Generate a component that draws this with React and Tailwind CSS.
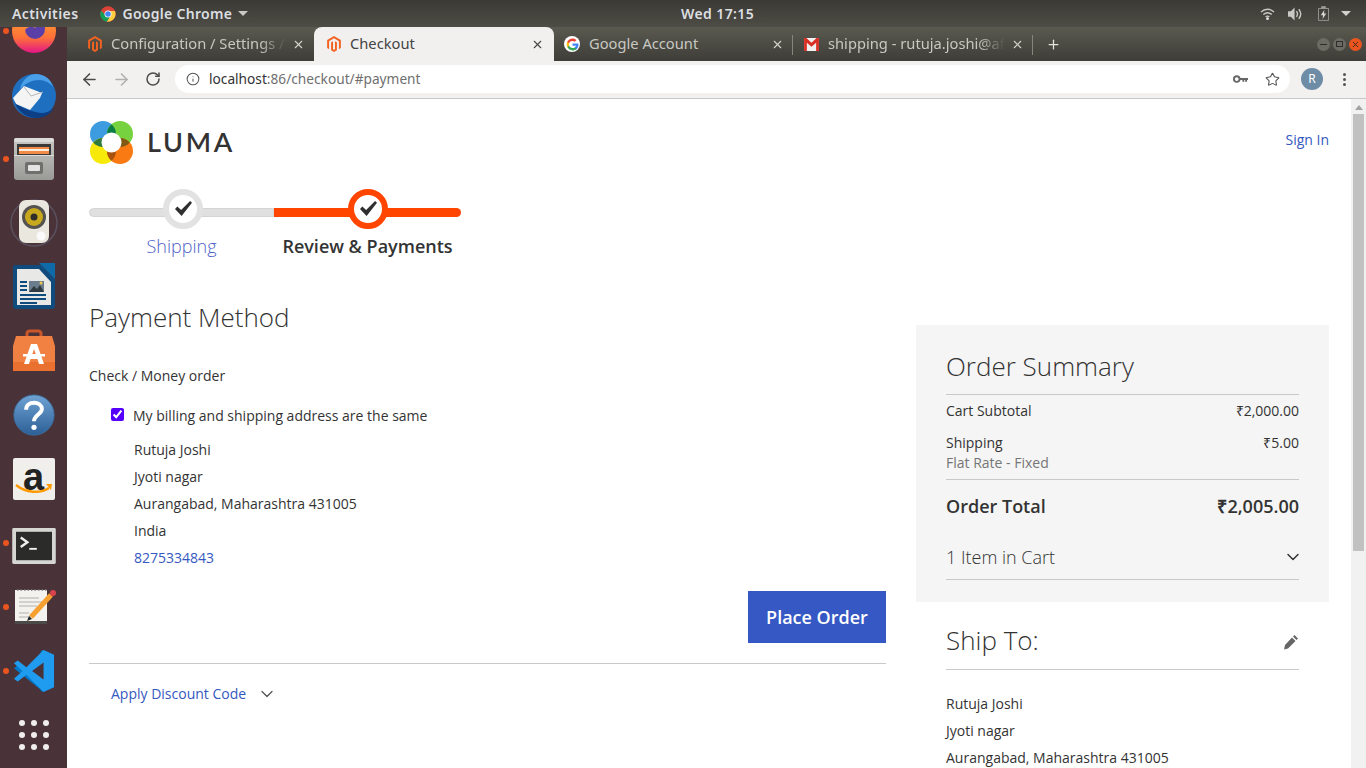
import { ArrowLeft, ArrowRight, RotateCw, Info, Star, X, Plus, ChevronDown } from 'lucide-react';

const sans = "font-['Open_Sans',sans-serif]";
const ui = "font-['Noto_Sans',sans-serif]";

function Magento({ className }) {
  return (
    <svg viewBox="0 0 24 28" className={className}>
      <path fill="#f26322" d="M12 0 0 7v14l3.4 2V9l8.6-5 8.6 5v14l3.4-2V7z" />
      <path fill="#f26322" d="M13.7 23 12 24l-1.700-1V9l-3.400 2v14l5.100 3 5.100-3V11l-3.400-2z" />
    </svg>
  );
}

function ChromeLogo() {
  return (
    <svg viewBox="0 0 32 32" className="w-4 h-4">
      <circle cx="16" cy="16" r="15.500" fill="#db4437" />
      <path fill="#0f9d58" d="M1.800 9.500A15.500 15.500 0 0 0 14 31.400l7-12.400-9 0z" />
      <path fill="#ffcd40" d="M16 10h13.900A15.500 15.500 0 0 1 14 31.400L21.500 19z" />
      <circle cx="16" cy="16" r="7" fill="#fff" />
      <circle cx="16" cy="16" r="5.500" fill="#4285f4" />
    </svg>
  );
}

function GoogleG() {
  return (
    <div className="w-4 h-4 rounded-full bg-white flex items-center justify-center shrink-0">
      <svg viewBox="0 0 48 48" className="w-[13px] h-[13px]">
        <path fill="#4285f4" d="M46 24.500c0-1.600-.1-3.100-.4-4.500H24v8.700h12.400c-.5 2.800-2.100 5.200-4.500 6.800v5.700h7.300C43.500 36.700 46 31.100 46 24.500z" />
        <path fill="#34a853" d="M24 46c6.100 0 11.200-2 15-5.500l-7.300-5.700c-2 1.400-4.600 2.200-7.700 2.200-5.900 0-10.900-4-12.700-9.300H4.700v5.900C8.400 40.900 15.700 46 24 46z" />
        <path fill="#fbbc05" d="M11.300 28.700c-.5-1.400-.7-2.900-.7-4.700s.3-3.300.7-4.700v-5.900H4.700C3.300 16.100 2.500 19.900 2.500 24s.8 7.900 2.200 10.600z" />
        <path fill="#ea4335" d="M24 10.800c3.300 0 6.300 1.100 8.600 3.400l6.500-6.500C35.200 4.100 30.100 2 24 2 15.700 2 8.400 7.100 4.700 13.400l6.600 5.900c1.800-5.300 6.800-8.500 12.700-8.500z" />
      </svg>
    </div>
  );
}

function GmailIcon() {
  return (
    <svg viewBox="0 0 16 14" className="w-[15px] h-[13px] shrink-0">
      <rect x="0" y="0" width="16" height="14" fill="#f1f1f1" />
      <path fill="#d93025" d="M0 0h2.500L8 5 13.500 0H16v14h-3V5L8 9.500 3 5v9H0z" />
    </svg>
  );
}

function Tab({ icon, title, width, active, sep, fade }) {
  return (
    <div className={`h-full flex items-center shrink-0 relative ${width} ${active ? 'bg-[#f2f0ef] rounded-t-[8px] text-[#444]' : 'text-[#c8c8c2]'}`}>
      {icon}
      <span className={`ml-[9px] mb-[2px] flex-1 whitespace-nowrap text-[14.7px] ${fade ? '[mask-image:linear-gradient(to_right,black_85%,transparent)]' : ''}`}>{title}</span>
      <X size={13} strokeWidth={2} className={`ml-[6px] shrink-0 ${active ? 'mr-[10px] text-[#444]' : 'mr-[9px] text-[#d5d5d0]'}`} />
      {sep && <div className="absolute right-0 top-[8px] h-[20px] w-px bg-[#85857e]" />}
    </div>
  );
}

function DockItem({ dot, children }) {
  return (
    <div className="h-16 shrink-0 relative flex items-center justify-center">
      {dot && <div className="absolute left-[3px] top-[29px] w-[6px] h-[6px] rounded-full bg-[#e95420]" />}
      {children}
    </div>
  );
}

function Dock() {
  return (
    <div className="w-[67px] shrink-0 bg-[#4a3239] overflow-hidden flex flex-col">
      <div className="-mt-[28px] flex flex-col">
        <DockItem dot>
          <svg viewBox="0 0 48 48" className="w-12 h-12">
            <defs>
              <linearGradient id="ff" x1="0" y1="0" x2="0" y2="1">
                <stop offset="0" stopColor="#ffb02e" />
                <stop offset="0.65" stopColor="#ff7139" />
                <stop offset="1" stopColor="#e31587" />
              </linearGradient>
            </defs>
            <circle cx="24" cy="24" r="22" fill="url(#ff)" />
            <circle cx="25" cy="22" r="10" fill="#5b3fa8" />
            <path fill="#ff8a3c" d="M14 14c6 0 10 3 12 7-5-2-9-1-11 2-2-3-2-6-1-9z" />
          </svg>
        </DockItem>
        <DockItem>
          <svg viewBox="0 0 48 48" className="w-12 h-12">
            <circle cx="24" cy="25" r="22" fill="#1f6fc0" />
            <path fill="#0c3f86" d="M4 30c3 10 12 17 22 17 8 0 15-4 18-10-6 5-12 6-18 4C17 39 9 36 4 30z" />
            <path fill="#4aa0e8" d="M10 18c2-9 9-15 16-15 8 0 15 5 17 13-3-4-8-7-14-7-7 0-13 3-19 9z" />
            <path fill="#f4f4f4" d="M3 27l11-12 18 7-2 5-10 12-14-6z" />
            <path fill="none" stroke="#b8b8b8" strokeWidth="1" d="M14 16l7 9 12-4" />
          </svg>
        </DockItem>
        <DockItem dot>
          <svg viewBox="0 0 48 48" className="w-12 h-12">
            <defs>
              <linearGradient id="cab" x1="0" y1="0" x2="0" y2="1">
                <stop offset="0" stopColor="#c8c8c5" />
                <stop offset="1" stopColor="#9a9a97" />
              </linearGradient>
            </defs>
            <rect x="4" y="3" width="40" height="42" rx="3" fill="url(#cab)" />
            <rect x="4" y="3" width="40" height="4" rx="2" fill="#dcdcd8" />
            <rect x="7" y="9" width="34" height="11" fill="#3b3a38" />
            <rect x="9" y="12" width="30" height="7" fill="#f08a45" />
            <rect x="9" y="14" width="30" height="2" fill="#f7efe4" />
            <rect x="4" y="20" width="40" height="1" fill="#dcdcd8" />
            <rect x="15" y="27" width="18" height="12" rx="2" fill="#6f6f6c" />
            <rect x="18" y="30" width="12" height="6" rx="1" fill="#e4e4e2" />
          </svg>
        </DockItem>
        <DockItem>
          <svg viewBox="0 0 48 48" className="w-12 h-12">
            <circle cx="24" cy="24" r="23" fill="none" stroke="#6a6f86" strokeWidth="1.500" opacity="0.5" />
            <rect x="9" y="1" width="30" height="43" rx="7" fill="#e9e7de" />
            <circle cx="24" cy="18" r="12" fill="#55534f" />
            <circle cx="24" cy="18" r="9" fill="#c8a81c" />
            <circle cx="24" cy="18" r="3.500" fill="#2e2d2a" />
            <circle cx="31" cy="37" r="4.500" fill="#fafafa" />
          </svg>
        </DockItem>
        <DockItem>
          <svg viewBox="0 0 48 48" className="w-12 h-12">
            <path fill="#0f4c7d" d="M4 2h27l14 14v27a3 3 0 0 1-3 3H6a3 3 0 0 1-3-3V4z" />
            <path fill="#0f6aa8" d="M29 0h16v16z" />
            <path fill="#e8e8e6" d="M7 6h22l12 13v23H7z" />
            <rect x="19" y="18" width="15" height="11" fill="#6b7d8c" />
            <path fill="#2f3a42" d="M19 29l5-6 3 3 3-4 4 7z" />
            <circle cx="31" cy="20" r="1.500" fill="#f2c94c" />
            <path stroke="#0f4c7d" strokeWidth="2" d="M10 19h7M10 23h7M10 27h7M10 32h26M10 36h26M10 40h17" />
          </svg>
        </DockItem>
        <DockItem>
          <svg viewBox="0 0 48 48" className="w-12 h-12">
            <path fill="none" stroke="#c9562a" strokeWidth="3" d="M17 11V6a3 3 0 0 1 3-2h8a3 3 0 0 1 3 2v5" />
            <path fill="#f08142" d="M6 9h36l3 10v25H3V19z" />
            <rect x="3" y="35" width="42" height="9" fill="#e9702f" />
            <path fill="#fff" d="M21 17h6l7 20h-5l-1.500-5h-7L19 37h-5zm3 5-2 6h4z" />
            <rect x="13" y="27" width="22" height="2.500" fill="#fff" />
          </svg>
        </DockItem>
        <DockItem>
          <svg viewBox="0 0 48 48" className="w-[42px] h-[42px]">
            <defs>
              <linearGradient id="hb" x1="0" y1="0" x2="0" y2="1">
                <stop offset="0" stopColor="#6fa3d4" />
                <stop offset="1" stopColor="#2c5f95" />
              </linearGradient>
            </defs>
            <circle cx="24" cy="24" r="23" fill="url(#hb)" stroke="#39709f" />
            <path fill="none" stroke="#fff" strokeWidth="4.500" d="M15 18c0-5 4-8 9-8s9 3 9 7c0 6-9 7-9 14" />
            <circle cx="24" cy="38" r="3" fill="#fff" />
          </svg>
        </DockItem>
        <DockItem>
          <div className="w-[42px] h-[42px] rounded-[2px] bg-[#f0efec] flex flex-col items-center relative">
            <span className="font-['Liberation_Sans',sans-serif] font-bold text-[38px] leading-[38px] text-[#222]">a</span>
            <svg viewBox="0 0 42 14" className="absolute left-0 bottom-[3px] w-[42px] h-[14px]">
              <path fill="none" stroke="#f90" strokeWidth="2.500" d="M3 2c10 8 24 9 33 3" />
              <path fill="#f90" d="M33 1l6 0-1 6z" />
            </svg>
          </div>
        </DockItem>
        <DockItem dot>
          <svg viewBox="0 0 46 38" className="w-[46px] h-[36px] mt-[6px]">
            <rect x="0" y="0" width="46" height="38" rx="1.500" fill="#d6d6d3" />
            <rect x="4" y="4" width="38" height="30" fill="#2b2b2a" />
            <path fill="none" stroke="#f0f0f0" strokeWidth="2.500" d="M9 10l7 5-7 5" />
            <rect x="18" y="21" width="8" height="2" fill="#f0f0f0" />
          </svg>
        </DockItem>
        <DockItem dot>
          <svg viewBox="0 0 46 38" className="w-[46px] h-[38px]">
            <rect x="4" y="2" width="32" height="34" fill="#f3f2ee" />
            <rect x="4" y="33" width="32" height="3" fill="#4a4a48" />
            <path stroke="#777" strokeWidth="1.500" strokeDasharray="1.500 2" d="M6 2h30" />
            <path stroke="#b0b0ac" strokeWidth="1" d="M8 10h20M8 14h24M8 18h18M8 25h10M8 29h12" />
            <path stroke="#f5a030" strokeWidth="5" d="M20 29 40 7" />
            <circle cx="42" cy="5" r="3" fill="#d9434e" />
            <path fill="#222" d="M16 33l2-5 3 3z" />
          </svg>
        </DockItem>
        <DockItem dot>
          <svg viewBox="0 0 44 44" className="w-[42px] h-[42px]">
            <path fill="#0065a9" d="M31 0l12 6v32l-12 6-2-1V1z" />
            <path fill="#007acc" d="M32 0v44L1 19l4-3 9 7z" />
            <path fill="#1f9cf0" d="M32 0 14 18 5 11 1 14l9 8-9 8 4 3 9-7 18 18 11-5V5z" />
            <path fill="#4a3239" d="M32 13 20 22l12 9z" />
          </svg>
        </DockItem>
        <DockItem>
          <div className="grid grid-cols-3 gap-[6px]">
            {Array.from({ length: 9 }).map((_, i) => (
              <div key={i} className="w-[6px] h-[6px] rounded-full bg-[#f0eeee]" />
            ))}
          </div>
        </DockItem>
      </div>
    </div>
  );
}

function TopBar() {
  return (
    <div className={`h-[27px] shrink-0 flex items-center bg-gradient-to-b from-[#3b3a35] to-[#4d4c45] text-[#dcdfe2] text-[14px] font-semibold tracking-[0.4px] ${ui}`}>
      <div className="w-[681px] flex items-center shrink-0">
        <span className="ml-[12px]">Activities</span>
        <div className="ml-[22px]"><ChromeLogo /></div>
        <span className="ml-[6px] tracking-[0.3px]">Google Chrome</span>
        <div className="ml-[6px] w-0 h-0 border-x-[5px] border-x-transparent border-t-[5px] border-t-[#c9c9c5]" />
      </div>
      <span>Wed 17:15</span>
      <div className="ml-auto flex items-center mr-[15px]">
        <svg viewBox="0 0 16 14" className="w-[15px] h-[14px] fill-none stroke-[#c8c8c4]" strokeWidth="1.500">
          <path d="M1 5c4-4 10-4 14 0M3.500 7.500c3-2.500 6-2.500 9 0M6 10c1-1 3-1 4 0" />
          <circle cx="8" cy="12" r="1.500" fill="#e8e8e4" stroke="none" />
        </svg>
        <svg viewBox="0 0 16 14" className="ml-[13px] w-[15px] h-[14px]">
          <path fill="#c8c8c4" d="M0 4h3l4-4v14l-4-4H0z" />
          <path fill="none" stroke="#c8c8c4" strokeWidth="1.500" d="M9 4c1.500 2 1.500 4 0 6M11.500 2c2.500 3 2.500 7 0 10" />
        </svg>
        <svg viewBox="0 0 12 16" className="ml-[15px] w-[11px] h-[15px]">
          <path fill="none" stroke="#9c9c98" strokeWidth="1" d="M.5 2.500h11v13H.5z" />
          <rect x="3.500" y="0" width="5" height="2.500" fill="#9c9c98" />
          <path fill="#d8d8d4" d="M7 4 3 10h2.500L5 14l4-6H6.500z" />
        </svg>
        <div className="ml-[12px] w-0 h-0 border-x-[5px] border-x-transparent border-t-[5px] border-t-[#d0d0cc]" />
      </div>
    </div>
  );
}

function TabStrip() {
  return (
    <div className={`h-[34px] shrink-0 flex items-stretch bg-gradient-to-b from-[#5a5a50] to-[#3e3d38] ${ui}`}>
      <div className="flex-1 flex items-stretch min-w-0">
        <Tab width="w-[247px] pl-[21px]" icon={<Magento className="w-[14px] h-[16px] shrink-0" />} title="Configuration / Settings /" fade />
        <Tab width="w-[240px] pl-[13px]" active icon={<Magento className="w-[14px] h-[16px] shrink-0" />} title="Checkout" />
        <Tab width="w-[239px] pl-[10px]" sep icon={<GoogleG />} title="Google Account" />
        <Tab width="w-[240px] pl-[11px]" sep fade icon={<GmailIcon />} title="shipping - rutuja.joshi@af" />
        <div className="flex items-center ml-[13px]"><Plus size={15} strokeWidth={2} className="text-[#e4e4e0]" /></div>
      </div>
      <div className="flex items-center gap-[3px] pr-[4px]">
        <div className="w-[13px] h-[13px] rounded-full bg-[#6b6b64] flex items-center justify-center"><div className="w-[7px] h-px bg-[#2f2f2b]" /></div>
        <div className="w-[13px] h-[13px] rounded-full bg-[#6b6b64] flex items-center justify-center"><div className="w-[7px] h-[6px] border border-[#2f2f2b]" /></div>
        <div className="w-[13px] h-[13px] rounded-full bg-[#e9541f] flex items-center justify-center"><X size={9} strokeWidth={2.500} className="text-[#3a2a20]" /></div>
      </div>
    </div>
  );
}

function Toolbar() {
  return (
    <div className={`h-[38px] shrink-0 flex items-center bg-[#f2f1f0] border-b border-[#c8c8c8] pb-[1px] ${ui}`}>
      <ArrowLeft size={19} strokeWidth={2} className="ml-[13px] text-[#4b4b4b]" />
      <ArrowRight size={19} strokeWidth={2} className="ml-[13px] text-[#b0b0b0]" />
      <RotateCw size={16} strokeWidth={2.250} className="ml-[14px] text-[#4b4b4b]" />
      <div className="ml-[14px] w-[1115px] h-[28px] rounded-full bg-white flex items-center">
        <Info size={14} strokeWidth={1.750} className="ml-[11px] text-[#555]" />
        <span className="ml-[9px] text-[13.7px] text-[#333]">localhost<span className="text-[#6f6f6f]">:86/checkout/#payment</span></span>
        <svg viewBox="0 0 16 8" className="ml-auto w-[15px] h-[8px]">
          <circle cx="4" cy="4" r="3" fill="none" stroke="#666" strokeWidth="2" />
          <path fill="#666" d="M7 3h9v2h-1v2h-2V5h-1v2h-2V5H7z" />
        </svg>
        <Star size={15} strokeWidth={1.750} className="ml-[17px] mr-[10px] text-[#555]" />
      </div>
      <div className="ml-[11px] w-[22px] h-[22px] rounded-full bg-[#6e8ca6] text-white text-[12px] flex items-center justify-center">R</div>
      <div className="ml-[20px] flex flex-col gap-[2px]">
        <div className="w-[3px] h-[3px] rounded-full bg-[#555]" />
        <div className="w-[3px] h-[3px] rounded-full bg-[#555]" />
        <div className="w-[3px] h-[3px] rounded-full bg-[#555]" />
      </div>
    </div>
  );
}

function Check() {
  return (
    <svg viewBox="0 0 20 18" className="w-[19px] h-[17px] mb-[2px]">
      <path fill="#2f2f2f" d="M1 9.500 3.500 7l4 3.500L17 1l2 2L8 17z" />
    </svg>
  );
}

function Step({ label, active }) {
  return (
    <div className={`shrink-0 ${active ? 'w-[187px]' : 'w-[185px]'}`}>
      <div className="relative h-[40px]">
        <div className={`mt-[19px] absolute inset-x-0 top-0 h-[9px] ${active ? 'bg-[#ff4500] rounded-r-full' : 'bg-[#e0e0e0] border border-[#d4d4d4] rounded-l-full'}`} />
        <div className={`absolute top-0 left-[74px] w-[40px] h-[40px] rounded-full bg-white flex items-center justify-center border-[6px] ${active ? 'border-[#ff4500]' : 'border-[#e2e2e2]'}`}>
          <Check />
        </div>
      </div>
      <div className={`mt-[5px] text-center text-[18px] leading-[24px] ${active ? 'font-semibold text-[#333]' : 'font-light text-[#4e63c9]'}`}>{label}</div>
    </div>
  );
}

function Logo() {
  return (
    <div className="flex items-center h-[44px]">
      <svg viewBox="0 0 43 43" className="ml-px w-[43px] h-[43px]">
        <circle cx="13" cy="13" r="13" fill="#3d9be0" />
        <circle cx="30" cy="13" r="13" fill="#76d23f" />
        <circle cx="13" cy="30" r="13" fill="#f7e90a" />
        <circle cx="30" cy="30" r="13" fill="#f97a12" />
        {/* overlaps of neighbouring circles */}
        <path fill="#0b7d45" d="M21.500 3.200A13 13 0 0 1 21.500 22.800A13 13 0 0 1 21.500 3.200z" />
        <path fill="#a8520f" d="M21.500 20.200A13 13 0 0 1 21.500 39.800A13 13 0 0 1 21.500 20.200z" />
        <path fill="#2f7a3c" d="M3.200 21.500A13 13 0 0 1 22.800 21.500A13 13 0 0 1 3.200 21.500z" />
        <path fill="#7f5a14" d="M20.200 21.500A13 13 0 0 1 39.800 21.500A13 13 0 0 1 20.200 21.500z" />
        <circle cx="21.500" cy="21.500" r="10" fill="#fff" />
      </svg>
      <span className="ml-[14px] font-['Lato',sans-serif] font-semibold text-[27px] tracking-[2.700px] text-[#333]">LUMA</span>
    </div>
  );
}

function LeftColumn() {
  return (
    <div className="w-[797px] shrink-0">
      <div className="text-[26px] font-light leading-[36px] text-[#333]">Payment Method</div>
      <div className="mt-[31px] leading-[20px]">Check / Money order</div>
      <label className="mt-[20px] ml-[22px] flex items-center leading-[20px]">
        <input type="checkbox" defaultChecked className="w-[13px] h-[13px] mb-[3px] accent-[#5500ff]" />
        <span className="ml-[9px]">My billing and shipping address are the same</span>
      </label>
      <div className="ml-[45px] mt-[10px] leading-[27px]">
        <div>Rutuja Joshi</div>
        <div>Jyoti nagar</div>
        <div>Aurangabad, Maharashtra 431005</div>
        <div>India</div>
        <div className="text-[#3558c0]">8275334843</div>
      </div>
      <div className="mt-[20px] flex justify-end">
        <button className="w-[138px] h-[52px] bg-[#3558c4] text-white text-[18px] font-semibold">Place Order</button>
      </div>
      <div className="mt-[20px] border-t border-[#c9c9c9] pt-[20px] pl-[22px] flex items-center text-[#3558c0]">
        <span className="leading-[20px]">Apply Discount Code</span>
        <ChevronDown size={20} strokeWidth={1.500} className="ml-[11px] text-[#555]" />
      </div>
    </div>
  );
}

function Sidebar() {
  return (
    <div className="w-[413px] shrink-0 mt-[26px]">
      <div className="bg-[#f5f5f5] px-[30px] pt-[23px] h-[277px]">
        <div className="text-[26px] font-light leading-[36px] pb-[10px] border-b border-[#c9c9c9]">Order Summary</div>
        <div className="mt-[6px] flex justify-between leading-[20px]"><span>Cart Subtotal</span><span>₹2,000.00</span></div>
        <div className="mt-[12px] flex justify-between leading-[20px]"><span>Shipping</span><span>₹5.00</span></div>
        <div className="leading-[20px] text-[#757575]">Flat Rate - Fixed</div>
        <div className="mt-[6px] pt-[14px] border-t border-[#c9c9c9] flex justify-between text-[18px] font-semibold leading-[24px]"><span>Order Total</span><span>₹2,005.00</span></div>
        <div className="mt-[26px] pb-[9px] border-b border-[#c9c9c9] flex items-center justify-between">
          <span className="text-[18px] font-light leading-[26px]">1 Item in Cart</span>
          <ChevronDown size={20} strokeWidth={1.750} className="text-[#333] -mr-[4px]" />
        </div>
      </div>
      <div className="px-[30px]">
        <div className="mt-[20px] flex items-center justify-between border-b border-[#c9c9c9] pb-[11px]">
          <span className="text-[26px] font-light leading-[36px]">Ship To:</span>
          <svg viewBox="0 0 16 16" className="w-[16px] h-[16px] mt-[3px]">
            <path fill="#666" d="M11.500 1l3.500 3.500-1.500 1.500L10 2.500zM9 3.500 12.500 7l-7.500 7.500L1 15.500 2 11z" />
          </svg>
        </div>
        <div className="mt-[20px] leading-[27px]">
          <div>Rutuja Joshi</div>
          <div>Jyoti nagar</div>
          <div>Aurangabad, Maharashtra 431005</div>
        </div>
      </div>
    </div>
  );
}

function Scrollbar() {
  return (
    <div className="w-[15px] shrink-0 bg-[#f1f1f1] flex flex-col items-center">
      <div className="mt-[6px] w-0 h-0 border-x-[4px] border-x-transparent border-b-[5px] border-b-[#a3a3a3]" />
      <div className="mt-[4px] w-[11px] h-[437px] bg-[#c1c1c1]" />
    </div>
  );
}

export default function App() {
  return (
    <div className={`w-[1366px] h-[768px] overflow-hidden flex flex-col bg-white ${sans}`}>
      <TopBar />
      <div className="flex-1 min-h-0 flex">
        <Dock />
        <div className="flex-1 min-w-0 flex flex-col">
          <TabStrip />
          <Toolbar />
          <div className="flex-1 min-h-0 flex">
            <div className="flex-1 min-w-0 overflow-hidden pl-[22px] pr-[22px] text-[14px] text-[#333]">
              <div className="flex justify-between items-start pt-[21px]">
                <Logo />
                <a className="mt-[10px] text-[#3558c0] leading-[20px]">Sign In</a>
              </div>
              <div className="mt-[25px] flex">
                <Step label="Shipping" />
                <Step label="Review & Payments" active />
              </div>
              <div className="mt-[41px] flex gap-[30px]">
                <LeftColumn />
                <Sidebar />
              </div>
            </div>
            <Scrollbar />
          </div>
        </div>
      </div>
    </div>
  );
}
